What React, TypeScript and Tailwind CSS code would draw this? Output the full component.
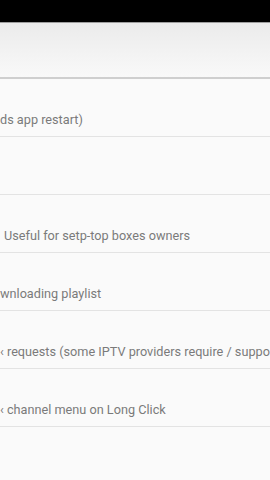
const rows: { text: string; indent: string }[] = [
  { text: 'ds app restart)', indent: 'pl-0' },
  { text: '', indent: 'pl-0' },
  { text: 'Useful for setp-top boxes owners', indent: 'pl-[4px]' },
  { text: 'wnloading playlist', indent: 'pl-0' },
  { text: '\u2039 requests (some IPTV providers require / suppor', indent: 'pl-0' },
  { text: '\u2039 channel menu on Long Click', indent: 'pl-0' },
];

export default function App() {
  return (
    <div className="w-[270px] h-[480px] overflow-hidden bg-[#fafafa] font-['Roboto',sans-serif]">
      <div className="h-[22px] bg-black" />
      <div className="h-[57px] border-t border-[#9e9e9e] border-b-2 border-b-[#cfcfcf] bg-gradient-to-b from-[#ebebeb] to-[#f9f9f9]" />
      {rows.map((row, i) => (
        <div
          key={i}
          className={`h-[58px] border-b border-[#e3e3e3] pt-[33px] ${row.indent} overflow-hidden`}
        >
          <p className="text-[12.7px] leading-[16px] text-[#7a7a7a] whitespace-nowrap">{row.text}</p>
        </div>
      ))}
    </div>
  );
}
